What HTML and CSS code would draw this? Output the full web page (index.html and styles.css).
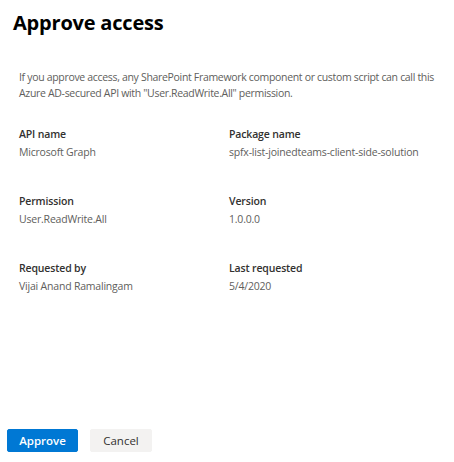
FILE: index.html
```html
<!DOCTYPE html>
<html lang="en">
<head>
<meta charset="utf-8">
<title>Approve access</title>
<link rel="stylesheet" href="styles.css">
</head>
<body>
<div class="panel">
  <h1 class="title">Approve access</h1>
  <p class="desc">If you approve access, any SharePoint Framework component or custom script can call this Azure AD-secured API with "User.ReadWrite.All" permission.</p>
  <div class="fields">
    <div class="field"><div class="label">API name</div><div class="value">Microsoft Graph</div></div>
    <div class="field"><div class="label">Package name</div><div class="value">spfx-list-joinedteams-client-side-solution</div></div>
    <div class="field"><div class="label">Permission</div><div class="value">User.ReadWrite.All</div></div>
    <div class="field"><div class="label">Version</div><div class="value">1.0.0.0</div></div>
    <div class="field"><div class="label">Requested by</div><div class="value">Vijai Anand Ramalingam</div></div>
    <div class="field"><div class="label">Last requested</div><div class="value">5/4/2020</div></div>
  </div>
  <div class="actions">
    <button class="btn btn-primary">Approve</button>
    <button class="btn btn-default">Cancel</button>
  </div>
</div>
</body>
</html>
```
FILE: styles.css
```css
html, body {
  margin: 0;
  padding: 0;
  background: #ffffff;
}
body {
  font-family: "Open Sans", "Noto Sans", sans-serif;
  color: #323130;
}
.panel {
  display: flex;
  flex-direction: column;
  min-height: 462px;
  box-sizing: border-box;
  padding: 0 0 10px 0;
}
.title {
  margin: 0;
  padding: 9px 0 0 13px;
  font-size: 20px;
  line-height: 28px;
  font-weight: 700;
  color: #000000;
  letter-spacing: -0.2px;
}
.desc {
  margin: 32px 0 0 0;
  padding: 0 14px 0 19px;
  font-size: 10.5px;
  line-height: 16px;
  color: #605e5c;
  letter-spacing: -0.32px;
}
.fields {
  display: grid;
  grid-template-columns: 210px 1fr;
  row-gap: 31px;
  padding: 0 0 0 19px;
  margin-top: 24px;
}
.label {
  font-size: 10.5px;
  line-height: 18px;
  font-weight: 600;
  color: #323130;
  letter-spacing: -0.15px;
}
.value {
  font-size: 10.5px;
  line-height: 18px;
  color: #605e5c;
  letter-spacing: -0.2px;
}
.actions {
  margin-top: auto;
  display: flex;
  gap: 12px;
  padding-left: 7px;
}
.btn {
  height: 23px;
  border-radius: 2px;
  font-family: inherit;
  font-size: 11.5px;
  padding: 0;
  cursor: pointer;
}
.btn-primary {
  width: 71px;
  background: #0078d4;
  border: 1px solid #0078d4;
  color: #ffffff;
  font-weight: 600;
}
.btn-default {
  width: 62px;
  background: #f3f2f1;
  border: 1px solid #f3f2f1;
  color: #323130;
  font-weight: 400;
}
```
